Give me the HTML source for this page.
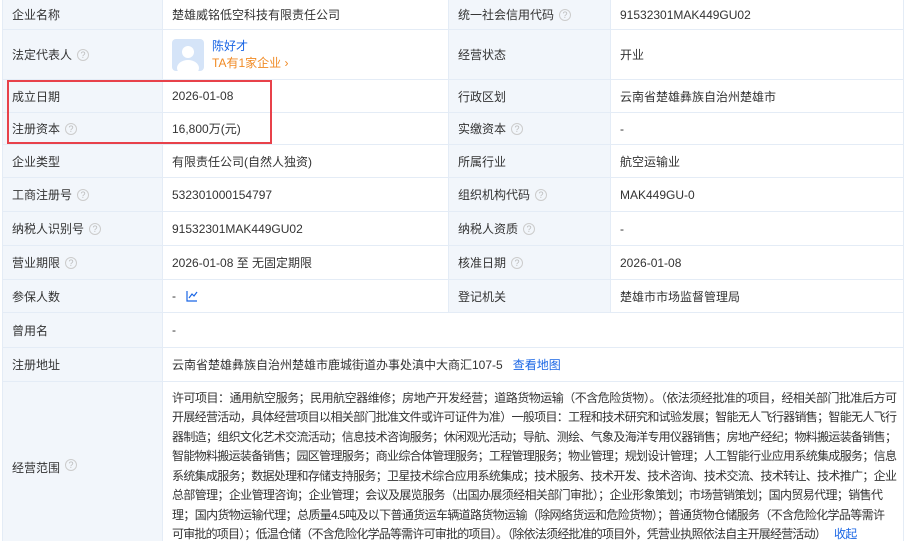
<!DOCTYPE html>
<html><head><meta charset="utf-8"><style>
*{margin:0;padding:0;box-sizing:border-box}
html,body{width:904px;height:541px;overflow:hidden}
body{background:#fff;font-family:"Liberation Sans","Noto Sans CJK SC",sans-serif;font-size:12px;color:#333;position:relative}
.c{position:absolute;border-right:1px solid #e4ecf6;border-bottom:1px solid #e4ecf6;padding-left:9px;display:flex;align-items:center}
.l{background:#f2f6fb}
.q{display:inline-block;width:12px;height:12px;border:1px solid #ccc;border-radius:50%;color:#bbb;font-size:9px;line-height:10px;text-align:center;margin-left:5px}
a{color:#1a66e5;text-decoration:none}
.ln{white-space:nowrap;width:724px;letter-spacing:-1px;text-align:justify;text-align-last:justify;height:19.45px;line-height:19.45px;overflow:visible}
</style></head><body>
<div style="position:absolute;left:0;top:0;width:3px;height:541px;border-right:1px solid #e4ecf6"></div>
<div class="c l" style="left:3px;top:0;width:160px;height:30px">企业名称</div>
<div class="c" style="left:163px;top:0;width:286px;height:30px">楚雄威铭低空科技有限责任公司</div>
<div class="c l" style="left:449px;top:0;width:162px;height:30px">统一社会信用代码<span class="q">?</span></div>
<div class="c" style="left:611px;top:0;width:293px;height:30px">91532301MAK449GU02</div>

<div class="c l" style="left:3px;top:30px;width:160px;height:50px">法定代表人<span class="q">?</span></div>
<div class="c" style="left:163px;top:30px;width:286px;height:50px"><div style="width:32px;height:32px;background:#d5e4f8;border-radius:4px;position:relative;overflow:hidden;margin-right:8px"><div style="position:absolute;left:10px;top:7px;width:12px;height:12px;border-radius:50%;background:#fff"></div><div style="position:absolute;left:5px;top:21px;width:22px;height:16px;border-radius:50%;background:#fff"></div></div><div><div style="color:#1a66e5;line-height:17px">陈好才</div><div style="color:#f08a24;line-height:17px">TA有1家企业 ›</div></div></div>
<div class="c l" style="left:449px;top:30px;width:162px;height:50px">经营状态</div>
<div class="c" style="left:611px;top:30px;width:293px;height:50px">开业</div>

<div class="c l" style="left:3px;top:80px;width:160px;height:33px">成立日期</div>
<div class="c" style="left:163px;top:80px;width:286px;height:33px">2026-01-08</div>
<div class="c l" style="left:449px;top:80px;width:162px;height:33px">行政区划</div>
<div class="c" style="left:611px;top:80px;width:293px;height:33px">云南省楚雄彝族自治州楚雄市</div>

<div class="c l" style="left:3px;top:113px;width:160px;height:32px">注册资本<span class="q">?</span></div>
<div class="c" style="left:163px;top:113px;width:286px;height:32px">16,800万(元)</div>
<div class="c l" style="left:449px;top:113px;width:162px;height:32px">实缴资本<span class="q">?</span></div>
<div class="c" style="left:611px;top:113px;width:293px;height:32px">-</div>

<div class="c l" style="left:3px;top:145px;width:160px;height:33px">企业类型</div>
<div class="c" style="left:163px;top:145px;width:286px;height:33px">有限责任公司(自然人独资)</div>
<div class="c l" style="left:449px;top:145px;width:162px;height:33px">所属行业</div>
<div class="c" style="left:611px;top:145px;width:293px;height:33px">航空运输业</div>

<div class="c l" style="left:3px;top:178px;width:160px;height:34px">工商注册号<span class="q">?</span></div>
<div class="c" style="left:163px;top:178px;width:286px;height:34px">532301000154797</div>
<div class="c l" style="left:449px;top:178px;width:162px;height:34px">组织机构代码<span class="q">?</span></div>
<div class="c" style="left:611px;top:178px;width:293px;height:34px">MAK449GU-0</div>

<div class="c l" style="left:3px;top:212px;width:160px;height:34px">纳税人识别号<span class="q">?</span></div>
<div class="c" style="left:163px;top:212px;width:286px;height:34px">91532301MAK449GU02</div>
<div class="c l" style="left:449px;top:212px;width:162px;height:34px">纳税人资质<span class="q">?</span></div>
<div class="c" style="left:611px;top:212px;width:293px;height:34px">-</div>

<div class="c l" style="left:3px;top:246px;width:160px;height:34px">营业期限<span class="q">?</span></div>
<div class="c" style="left:163px;top:246px;width:286px;height:34px">2026-01-08 至 无固定期限</div>
<div class="c l" style="left:449px;top:246px;width:162px;height:34px">核准日期<span class="q">?</span></div>
<div class="c" style="left:611px;top:246px;width:293px;height:34px">2026-01-08</div>

<div class="c l" style="left:3px;top:280px;width:160px;height:33px">参保人数</div>
<div class="c" style="left:163px;top:280px;width:286px;height:33px">-<svg width="12" height="12" viewBox="0 0 12 12" style="margin-left:10px"><path d="M1 1V11H11M3 8L6 4L8 6L11 2" fill="none" stroke="#1a66e5" stroke-width="1.2"/></svg></div>
<div class="c l" style="left:449px;top:280px;width:162px;height:33px">登记机关</div>
<div class="c" style="left:611px;top:280px;width:293px;height:33px">楚雄市市场监督管理局</div>

<div class="c l" style="left:3px;top:313px;width:160px;height:35px">曾用名</div>
<div class="c" style="left:163px;top:313px;width:741px;height:35px">-</div>

<div class="c l" style="left:3px;top:348px;width:160px;height:34px">注册地址</div>
<div class="c" style="left:163px;top:348px;width:741px;height:34px">云南省楚雄彝族自治州楚雄市鹿城街道办事处滇中大商汇107-5<a style="margin-left:10px">查看地图</a></div>

<div class="c l" style="left:3px;top:382px;width:160px;height:170px;align-items:flex-start;padding-top:77px">经营范围<span class="q">?</span></div>
<div class="c" style="left:163px;top:382px;width:741px;height:170px;display:block;padding:7px 0 0 9px;overflow:hidden">
<div class="ln">许可项目：通用航空服务；民用航空器维修；房地产开发经营；道路货物运输（不含危险货物）。（依法须经批准的项目，经相关部门批准后方可</div>
<div class="ln">开展经营活动，具体经营项目以相关部门批准文件或许可证件为准）一般项目：工程和技术研究和试验发展；智能无人飞行器销售；智能无人飞行</div>
<div class="ln">器制造；组织文化艺术交流活动；信息技术咨询服务；休闲观光活动；导航、测绘、气象及海洋专用仪器销售；房地产经纪；物料搬运装备销售；</div>
<div class="ln">智能物料搬运装备销售；园区管理服务；商业综合体管理服务；工程管理服务；物业管理；规划设计管理；人工智能行业应用系统集成服务；信息</div>
<div class="ln">系统集成服务；数据处理和存储支持服务；卫星技术综合应用系统集成；技术服务、技术开发、技术咨询、技术交流、技术转让、技术推广；企业</div>
<div class="ln" style="width:710px">总部管理；企业管理咨询；企业管理；会议及展览服务（出国办展须经相关部门审批）；企业形象策划；市场营销策划；国内贸易代理；销售代</div>
<div class="ln" style="width:712px">理；国内货物运输代理；总质量4.5吨及以下普通货运车辆道路货物运输（除网络货运和危险货物）；普通货物仓储服务（不含危险化学品等需许</div>
<div class="ln" style="text-align:left;text-align-last:left;letter-spacing:-0.8px">可审批的项目）；低温仓储（不含危险化学品等需许可审批的项目）。（除依法须经批准的项目外，凭营业执照依法自主开展经营活动）<a style="margin-left:8px">收起</a></div>
</div>

<div style="position:absolute;left:7px;top:80px;width:265px;height:64px;border:2px solid #e8414a"></div>
</body></html>
